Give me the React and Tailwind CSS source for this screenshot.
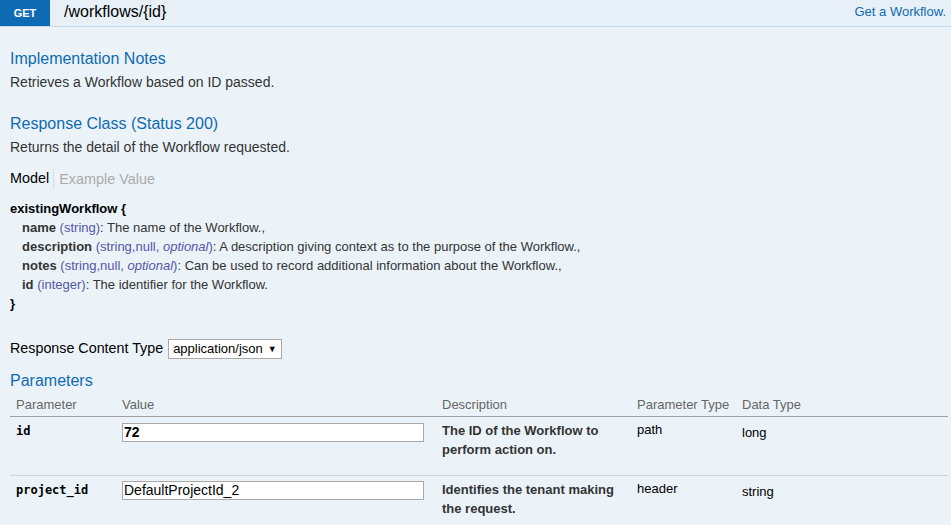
import React from "react";

const F = { fontFamily: '"Liberation Sans", Arial, sans-serif' };

function Prop({ name, type, opt, desc, last }) {
  return (
    <div className="h-[19px] leading-[19px] pl-[12px] whitespace-nowrap">
      <span className="font-bold">{name}</span>{" "}
      <span className="text-[#55a]">
        ({type}
        {opt && (
          <>
            , <span className="italic">optional</span>
          </>
        )}
        )
      </span>
      : {desc}
      {last ? "" : ","}
    </div>
  );
}

export default function App() {
  return (
    <div className="w-[951px] h-[525px] overflow-hidden bg-[#ebf3f9] text-[#333]" style={F}>
      <div className="h-[27px] bg-[#e7f0f7] border-b border-[#c3d9ec] flex items-stretch">
        <div className="w-[50px] h-[26px] bg-[#0f6ab4] text-white font-bold text-[11px] flex items-center justify-center">
          GET
        </div>
        <div className="pl-[14px] text-[16px] leading-[24px] text-black">/workflows/&#123;id&#125;</div>
        <div className="ml-auto pr-[5px] text-[13px] leading-[24px] text-[#0f6ab4]">Get a Workflow.</div>
      </div>

      <div className="pl-[10px]">
        <div className="mt-[22px] text-[16px] leading-[20px] text-[#0f6ab4]">Implementation Notes</div>
        <div className="mt-[4px] text-[14px] leading-[18px]">Retrieves a Workflow based on ID passed.</div>

        <div className="mt-[23px] text-[16px] leading-[20px] text-[#0f6ab4]">Response Class (Status 200)</div>
        <div className="mt-[4px] text-[14px] leading-[18px]">Returns the detail of the Workflow requested.</div>

        <div className="mt-[13px] flex items-center h-[20px] text-[14.4px]">
          <span className="text-black pr-[4px]">Model</span>
          <span className="border-l border-[#d8dde2] h-[20px] pl-[5px] text-[#aaa] leading-[20px]">Example Value</span>
        </div>

        <div className="mt-[10px] text-[13px] text-[#333]">
          <div className="h-[19px] leading-[19px] font-bold text-black">existingWorkflow &#123;</div>
          <Prop name="name" type="string" desc="The name of the Workflow." />
          <Prop name="description" type="string,null" opt desc="A description giving context as to the purpose of the Workflow." />
          <Prop name="notes" type="string,null" opt desc="Can be used to record additional information about the Workflow." />
          <Prop name="id" type="integer" desc="The identifier for the Workflow." last />
          <div className="h-[19px] leading-[19px] font-bold text-black">&#125;</div>
        </div>

        <div className="mt-[26px] flex items-center h-[20px] text-[14.3px] text-black">
          <span>Response Content Type</span>
          <div className="ml-[5px] w-[114px] h-[20px] bg-white border border-[#a9a9a9] text-[13px] leading-[18px] pl-[4px] flex items-center gap-[5px]">
            <span>application/json</span>
            <span className="text-[9px]">▼</span>
          </div>
        </div>

        <div className="mt-[12px] text-[16px] leading-[20px] text-[#0f6ab4]">Parameters</div>

        <div className="w-[938px]">
          <div className="flex h-[26px] border-b border-[#a0a0a0] text-[13px] text-[#666] leading-[18px] pt-[5px]">
            <div className="w-[106px] pl-[6px]">Parameter</div>
            <div className="w-[320px] pl-[6px]">Value</div>
            <div className="w-[195px] pl-[6px]">Description</div>
            <div className="w-[105px] pl-[6px]">Parameter Type</div>
            <div className="flex-1 pl-[6px]">Data Type</div>
          </div>

          <div className="flex h-[59px] border-b border-[#cfd3d6] text-[13px]">
            <div className="w-[106px] pl-[6px] pt-[6px] leading-[16px] font-bold text-black text-[12px]" style={{ fontFamily: '"DejaVu Sans Mono", monospace' }}>
              id
            </div>
            <div className="w-[320px] pl-[6px] pt-[6px]">
              <div className="w-[302px] h-[19px] bg-white border border-[#a9a9a9] text-[14px] font-bold text-black leading-[17px] pl-[1px]">72</div>
            </div>
            <div className="w-[195px] pl-[6px] pt-[4px] font-bold leading-[19px] text-[#333]">
              The ID of the Workflow to perform action on.
            </div>
            <div className="w-[105px] pl-[6px] pt-[3px] leading-[19px] text-black">path</div>
            <div className="flex-1 pl-[6px] pt-[6px] leading-[19px] text-black">long</div>
          </div>

          <div className="flex h-[60px] text-[13px]">
            <div className="w-[106px] pl-[6px] pt-[6px] leading-[16px] font-bold text-black text-[12px]" style={{ fontFamily: '"DejaVu Sans Mono", monospace' }}>
              project_id
            </div>
            <div className="w-[320px] pl-[6px] pt-[5px]">
              <div className="w-[302px] h-[19px] bg-white border border-[#a9a9a9] text-[14px] text-black leading-[17px] pl-[1px]">DefaultProjectId_2</div>
            </div>
            <div className="w-[195px] pl-[6px] pt-[4px] font-bold leading-[19px] text-[#333]">
              Identifies the tenant making the request.
            </div>
            <div className="w-[105px] pl-[6px] pt-[3px] leading-[19px] text-black">header</div>
            <div className="flex-1 pl-[6px] pt-[6px] leading-[19px] text-black">string</div>
          </div>
        </div>
      </div>
    </div>
  );
}
